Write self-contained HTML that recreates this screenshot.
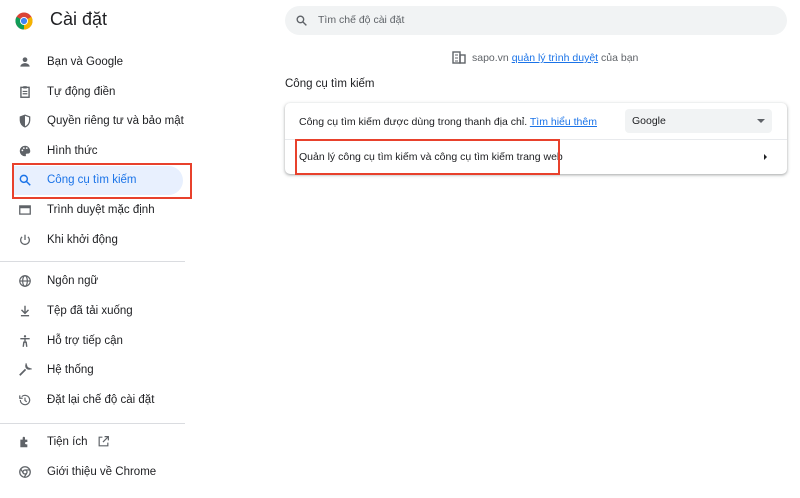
<!DOCTYPE html>
<html><head><meta charset="utf-8"><style>
body{margin:0;width:800px;height:498px;background:#fff;font-family:"Liberation Sans",Arial,sans-serif;position:relative;overflow:hidden;color:#202124}
.a{position:absolute}
.nav{font-size:11.5px;color:#202124;left:47px;margin-top:1px}
.ic{position:absolute;left:18px;width:14px;height:14px}
.div{position:absolute;left:0;width:185px;height:1px;background:#dadce0}
</style></head><body>
<svg class="a" style="left:15px;top:12px" width="18" height="18" viewBox="0 0 18 18"><circle cx="9" cy="9" r="8.5" fill="#db4437"/><path d="M9 9 L1.6 13.2 A8.5 8.5 0 0 0 9 17.5Z" fill="#0f9d58"/><path d="M9 9 L9 17.5 A8.5 8.5 0 0 0 16.4 4.8 Z" fill="#f4b400"/><path d="M9 9 L1.6 13.2 A8.5 8.5 0 0 1 1.6 4.8Z" fill="#0f9d58"/><circle cx="9" cy="9" r="4" fill="#fff"/><circle cx="9" cy="9" r="3.1" fill="#4285f4"/></svg>
<div class="a" style="left:50px;top:9px;font-size:18px">Cài đặt</div>
<div class="a" style="left:285px;top:6px;width:502px;height:29px;background:#f1f3f4;border-radius:15px"></div>
<svg class="a" style="left:295px;top:14px" width="13" height="13" viewBox="0 0 24 24"><circle cx="10" cy="10" r="6" fill="none" stroke="#5f6368" stroke-width="2.5"/><path d="M14.5 14.5 21 21" stroke="#5f6368" stroke-width="2.5"/></svg>
<div class="a" style="left:318px;top:14px;font-size:10.5px;color:#5f6368">Tìm chế độ cài đặt</div>

<div class="a" style="left:13px;top:166px;width:170px;height:29px;background:#e8f0fe;border-radius:0 15px 15px 0"></div>
<div class="a" style="left:12px;top:163px;width:176px;height:32px;border:2px solid #e8412c"></div>

<svg class="ic" style="top:55px" viewBox="0 0 24 24"><circle cx="12" cy="8" r="4" fill="#5f6368"/><path d="M4 20c0-4 5-6 8-6s8 2 8 6z" fill="#5f6368"/></svg>
<div class="a nav" style="top:55px">Bạn và Google</div>
<svg class="ic" style="top:85px" viewBox="0 0 24 24"><rect x="5" y="4" width="14" height="17" fill="none" stroke="#5f6368" stroke-width="2.4"/><rect x="9" y="2" width="6" height="4" fill="#5f6368"/><path d="M8 11h8M8 15h8" stroke="#5f6368" stroke-width="2"/></svg>
<div class="a nav" style="top:85px">Tự động điền</div>
<svg class="ic" style="top:114px" viewBox="0 0 24 24"><path d="M12 2 4 5v6c0 5 3.5 9.5 8 11 4.5-1.5 8-6 8-11V5z" fill="none" stroke="#5f6368" stroke-width="2.2"/><path d="M12 2v20C7.5 20.5 4 16 4 11V5z" fill="#5f6368"/></svg>
<div class="a nav" style="top:114px">Quyền riêng tư và bảo mật</div>
<svg class="ic" style="top:144px" viewBox="0 0 24 24"><path d="M12 3a9 9 0 0 0 0 18c1.5 0 2-1 1.5-2-.6-1.3.3-2.5 1.7-2.5H17a4 4 0 0 0 4-4C21 7 17 3 12 3z" fill="#5f6368"/><circle cx="7.5" cy="11" r="1.5" fill="#fff"/><circle cx="10" cy="7" r="1.5" fill="#fff"/><circle cx="15" cy="7" r="1.5" fill="#fff"/></svg>
<div class="a nav" style="top:144px">Hình thức</div>
<svg class="ic" style="top:173px" viewBox="0 0 24 24"><circle cx="10" cy="10" r="6" fill="none" stroke="#1a73e8" stroke-width="2.5"/><path d="M14.5 14.5 21 21" stroke="#1a73e8" stroke-width="2.5"/></svg>
<div class="a nav" style="top:173px;color:#1a73e8">Công cụ tìm kiếm</div>
<svg class="ic" style="top:203px" viewBox="0 0 24 24"><rect x="3" y="5" width="18" height="14" fill="none" stroke="#5f6368" stroke-width="2.2"/><rect x="3" y="5" width="18" height="4" fill="#5f6368"/></svg>
<div class="a nav" style="top:203px">Trình duyệt mặc định</div>
<svg class="ic" style="top:233px" viewBox="0 0 24 24"><path d="M12 3v9" stroke="#5f6368" stroke-width="2.2"/><path d="M7 6.5a7.5 7.5 0 1 0 10 0" fill="none" stroke="#5f6368" stroke-width="2.2"/></svg>
<div class="a nav" style="top:233px">Khi khởi động</div>
<div class="div" style="top:261px"></div>
<svg class="ic" style="top:274px" viewBox="0 0 24 24"><circle cx="12" cy="12" r="9" fill="none" stroke="#5f6368" stroke-width="2"/><ellipse cx="12" cy="12" rx="4" ry="9" fill="none" stroke="#5f6368" stroke-width="2"/><path d="M3 12h18" stroke="#5f6368" stroke-width="2"/></svg>
<div class="a nav" style="top:274px">Ngôn ngữ</div>
<svg class="ic" style="top:304px" viewBox="0 0 24 24"><path d="M12 3v12M6 10l6 6 6-6M5 20h14" fill="none" stroke="#5f6368" stroke-width="2.4"/></svg>
<div class="a nav" style="top:304px">Tệp đã tải xuống</div>
<svg class="ic" style="top:334px" viewBox="0 0 24 24"><circle cx="12" cy="4" r="2" fill="#5f6368"/><path d="M4 8h16M12 8v6M9 22l1-8h4l1 8" fill="none" stroke="#5f6368" stroke-width="2.4"/></svg>
<div class="a nav" style="top:334px">Hỗ trợ tiếp cận</div>
<svg class="ic" style="top:363px" viewBox="0 0 24 24"><path d="M3 21 13 11M14 4a5 5 0 0 0 6 6l-3-1-2-2z" fill="none" stroke="#5f6368" stroke-width="3"/></svg>
<div class="a nav" style="top:363px">Hệ thống</div>
<svg class="ic" style="top:393px" viewBox="0 0 24 24"><path d="M4 12a8 8 0 1 0 2.5-5.8" fill="none" stroke="#5f6368" stroke-width="2"/><path d="M3 4v5h5" fill="none" stroke="#5f6368" stroke-width="2"/><path d="M12 8v5l3 2" fill="none" stroke="#5f6368" stroke-width="2"/></svg>
<div class="a nav" style="top:393px">Đặt lại chế độ cài đặt</div>
<div class="div" style="top:423px"></div>
<svg class="ic" style="top:435px" viewBox="0 0 24 24"><path d="M4 8h4V5a2 2 0 0 1 4 0v3h4v4h-2a2 2 0 0 0 0 4h2v5H4z" fill="#5f6368"/></svg>
<div class="a nav" style="top:435px">Tiện ích</div>
<svg class="a" style="left:97px;top:435px" width="13" height="13" viewBox="0 0 24 24"><path d="M10 4H4v16h16v-6M14 3h7v7M21 3 11 13" fill="none" stroke="#5f6368" stroke-width="2.2"/></svg>
<svg class="ic" style="top:465px" viewBox="0 0 24 24"><circle cx="12" cy="12" r="9" fill="none" stroke="#5f6368" stroke-width="2.2"/><circle cx="12" cy="12" r="3.5" fill="none" stroke="#5f6368" stroke-width="2.2"/><path d="M12 8.5h8.5M9 14 4.5 6.5M15 14l-4.5 7" stroke="#5f6368" stroke-width="2"/></svg>
<div class="a nav" style="top:465px">Giới thiệu về Chrome</div>

<svg class="a" style="left:452px;top:51px" width="14" height="13" viewBox="0 0 14 13"><rect x="1" y="1" width="7" height="11" fill="none" stroke="#5f6368" stroke-width="1.4"/><rect x="8" y="4" width="5" height="8" fill="none" stroke="#5f6368" stroke-width="1.4"/><path d="M3 4h3M3 7h3M3 10h3" stroke="#5f6368"/></svg>
<div class="a" style="left:472px;top:52px;font-size:10.5px;color:#5f6368">sapo.vn <span style="color:#1a73e8;text-decoration:underline">quản lý trình duyệt</span> của bạn</div>
<div class="a" style="left:285px;top:78px;font-size:11.5px">Công cụ tìm kiếm</div>
<div class="a" style="left:285px;top:103px;width:502px;height:71px;border-radius:5px;box-shadow:0 1px 2px rgba(60,64,67,.3),0 1px 3px 1px rgba(60,64,67,.15)"></div>
<div class="a" style="left:285px;top:139px;width:502px;height:1px;background:#e8eaed"></div>
<div class="a" style="left:299px;top:116px;font-size:10.5px">Công cụ tìm kiếm được dùng trong thanh địa chỉ. <span style="color:#1a73e8;text-decoration:underline">Tìm hiểu thêm</span></div>
<div class="a" style="left:625px;top:109px;width:147px;height:24px;background:#f1f3f4;border-radius:4px"></div>
<div class="a" style="left:632px;top:115px;font-size:10.5px">Google</div>
<div class="a" style="left:757px;top:119px;width:0;height:0;border-left:4px solid transparent;border-right:4px solid transparent;border-top:4px solid #5f6368"></div>
<div class="a" style="left:299px;top:151px;font-size:10.5px">Quản lý công cụ tìm kiếm và công cụ tìm kiếm trang web</div>
<div class="a" style="left:764px;top:154px;width:0;height:0;border-top:3px solid transparent;border-bottom:3px solid transparent;border-left:3px solid #202124"></div>
<div class="a" style="left:295px;top:139px;width:261px;height:32px;border:2px solid #e8412c"></div>
</body></html>
